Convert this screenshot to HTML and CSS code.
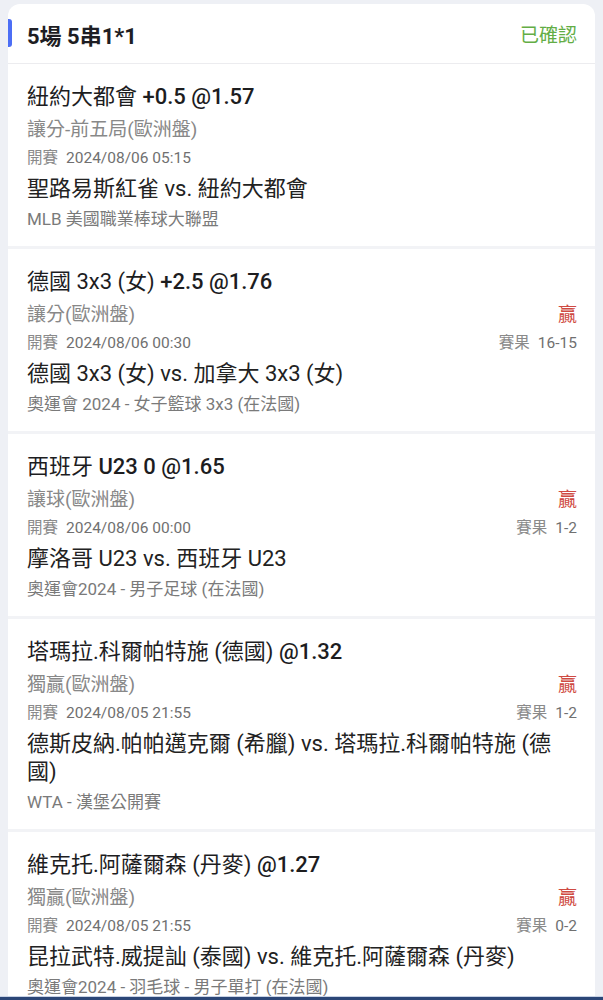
FILE: index.html
```html
<!DOCTYPE html>
<html lang="zh-Hant">

<head>
    <meta charset="UTF-8">
    <meta name="viewport" content="width=device-width, initial-scale=1.0">
    <title>串關注單</title>
    <link rel="stylesheet" href="styles.css">
</head>

<body>

    <div class="bet-card">
        <div class="bet-header">
            <span class="bet-title">5場 5串1*1</span>
            <span class="bet-status">已確認</span>
        </div>

        <div class="leg">
            <div class="leg-title">紐約大都會 <span class="odds">+0.5 @1.57</span></div>
            <div class="leg-row">
                <span class="leg-market">讓分-前五局(歐洲盤)</span>
            </div>
            <div class="leg-row">
                <span class="leg-time"><span class="label">開賽</span>2024/08/06 05:15</span>
            </div>
            <div class="leg-match">聖路易斯紅雀 vs. 紐約大都會</div>
            <div class="leg-league">MLB 美國職業棒球大聯盟</div>
        </div>

        <div class="leg">
            <div class="leg-title">德國 3x3 (女) <span class="odds">+2.5 @1.76</span></div>
            <div class="leg-row">
                <span class="leg-market">讓分(歐洲盤)</span>
                <span class="leg-win">贏</span>
            </div>
            <div class="leg-row">
                <span class="leg-time"><span class="label">開賽</span>2024/08/06 00:30</span>
                <span class="leg-score"><span class="label">賽果</span>16-15</span>
            </div>
            <div class="leg-match">德國 3x3 (女) vs. 加拿大 3x3 (女)</div>
            <div class="leg-league">奧運會 2024 - 女子籃球 3x3 (在法國)</div>
        </div>

        <div class="leg">
            <div class="leg-title">西班牙 <span class="odds">U23 0 @1.65</span></div>
            <div class="leg-row">
                <span class="leg-market">讓球(歐洲盤)</span>
                <span class="leg-win">贏</span>
            </div>
            <div class="leg-row">
                <span class="leg-time"><span class="label">開賽</span>2024/08/06 00:00</span>
                <span class="leg-score"><span class="label">賽果</span>1-2</span>
            </div>
            <div class="leg-match">摩洛哥 U23 vs. 西班牙 U23</div>
            <div class="leg-league">奧運會2024 - 男子足球 (在法國)</div>
        </div>

        <div class="leg">
            <div class="leg-title">塔瑪拉.科爾帕特施 (德國) <span class="odds">@1.32</span></div>
            <div class="leg-row">
                <span class="leg-market">獨贏(歐洲盤)</span>
                <span class="leg-win">贏</span>
            </div>
            <div class="leg-row">
                <span class="leg-time"><span class="label">開賽</span>2024/08/05 21:55</span>
                <span class="leg-score"><span class="label">賽果</span>1-2</span>
            </div>
            <div class="leg-match">德斯皮納.帕帕邁克爾 (希臘) vs. 塔瑪拉.科爾帕特施 (德國)</div>
            <div class="leg-league">WTA - 漢堡公開賽</div>
        </div>

        <div class="leg">
            <div class="leg-title">維克托.阿薩爾森 (丹麥) <span class="odds">@1.27</span></div>
            <div class="leg-row">
                <span class="leg-market">獨贏(歐洲盤)</span>
                <span class="leg-win">贏</span>
            </div>
            <div class="leg-row">
                <span class="leg-time"><span class="label">開賽</span>2024/08/05 21:55</span>
                <span class="leg-score"><span class="label">賽果</span>0-2</span>
            </div>
            <div class="leg-match">昆拉武特.威提訕 (泰國) vs. 維克托.阿薩爾森 (丹麥)</div>
            <div class="leg-league">奧運會2024 - 羽毛球 - 男子單打 (在法國)</div>
        </div>
    </div>

    <div class="bottom-bar"></div>

</body>

</html>
```

FILE: styles.css
```css
body {
    margin: 0;
    padding: 4px 8px 0 8px;
    background-color: #eef0f5;
    font-family: Roboto, "Noto Sans CJK TC", sans-serif;
    color: #222;
    overflow: hidden;
    height: 1000px;
    box-sizing: border-box;
}

.bet-card {
    background-color: #ffffff;
    border-radius: 12px 12px 0 0;
}

.bet-header {
    display: flex;
    align-items: center;
    justify-content: space-between;
    height: 59px;
    padding: 0 18px 0 19px;
    border-bottom: 1px solid #ececef;
    position: relative;
}

/* blue marker on the left */
.bet-header::before {
    content: "";
    position: absolute;
    left: 0;
    top: 15px;
    width: 4px;
    height: 28px;
    background-color: #4c6ef5;
    border-radius: 0 3px 3px 0;
}

.bet-title {
    font-size: 22px;
    font-weight: 700;
    color: #1e1e24;
}

.bet-status {
    font-size: 19px;
    color: #63ad45;
}

.leg {
    padding: 18px 18px 13px 19px;
    border-top: 3px solid #f2f3f6;
}

.bet-header + .leg {
    border-top: none;
}

.leg-title {
    font-size: 22px;
    font-weight: 400;
    line-height: 30px;
    color: #1d1d1f;
}

.leg-title .odds {
    font-weight: 500;
}

.leg-row {
    display: flex;
    justify-content: space-between;
    align-items: center;
}

.leg-row:nth-child(2) {
    height: 30px;
}

.leg-row:nth-child(3) {
    height: 28px;
}

.leg-market {
    font-size: 19px;
    color: #888;
}

.leg-win {
    font-size: 19px;
    color: #cf4a42;
}

.leg-time,
.leg-score {
    font-size: 15.5px;
    color: #707070;
}

.label {
    color: #8a8a8a;
    margin-right: 8px;
}

.leg-match {
    margin-top: 5px;
    font-size: 22px;
    line-height: 28px;
    color: #222;
}

.leg-league {
    margin-top: 2px;
    font-size: 17px;
    line-height: 28px;
    color: #7a7a7a;
}

.bottom-bar {
    position: fixed;
    left: 0;
    right: 0;
    bottom: 0;
    height: 3px;
    background-color: #2b4677;
    border-top: 1px solid #c8d2e4;
}
```
